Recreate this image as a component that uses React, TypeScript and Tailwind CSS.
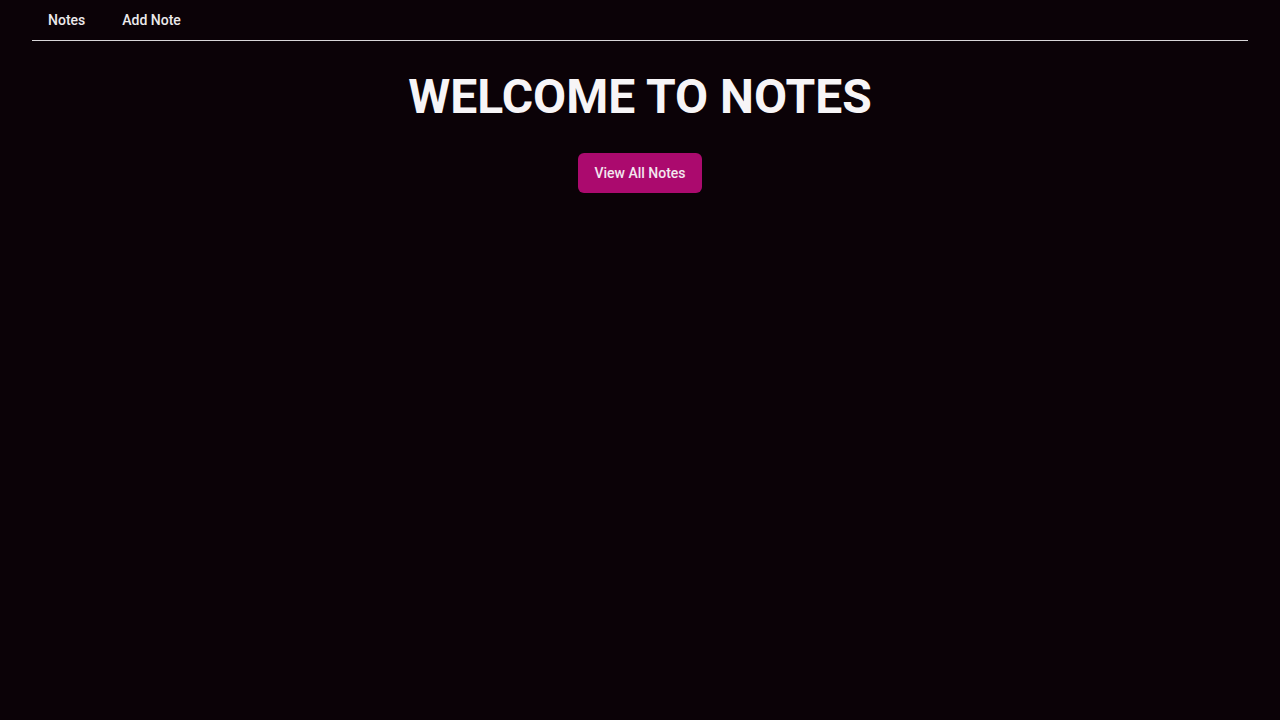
export default function App() {
  return (
    <div className="min-h-screen w-full bg-[#0b0207] text-[#f5f3f5]" style={{ fontFamily: "Roboto, 'Noto Sans', sans-serif" }}>
      <div className="px-8">
        <nav className="flex h-[41px] items-center gap-[5px] border-b border-[#d9d6d8]">
          <a className="px-4 text-sm font-medium text-[#ece9eb]">Notes</a>
          <a className="px-4 text-sm font-medium text-[#ece9eb]">Add Note</a>
        </nav>
      </div>
      <main className="flex flex-col items-center pt-8">
        <h1 className="text-5xl leading-[48px] font-bold text-[#f7f5f7]">WELCOME TO NOTES</h1>
        <button className="mt-8 h-10 rounded-md bg-[#ab0a6e] px-4 text-sm font-medium text-[#f3e6ee]">View All Notes</button>
      </main>
    </div>
  );
}
